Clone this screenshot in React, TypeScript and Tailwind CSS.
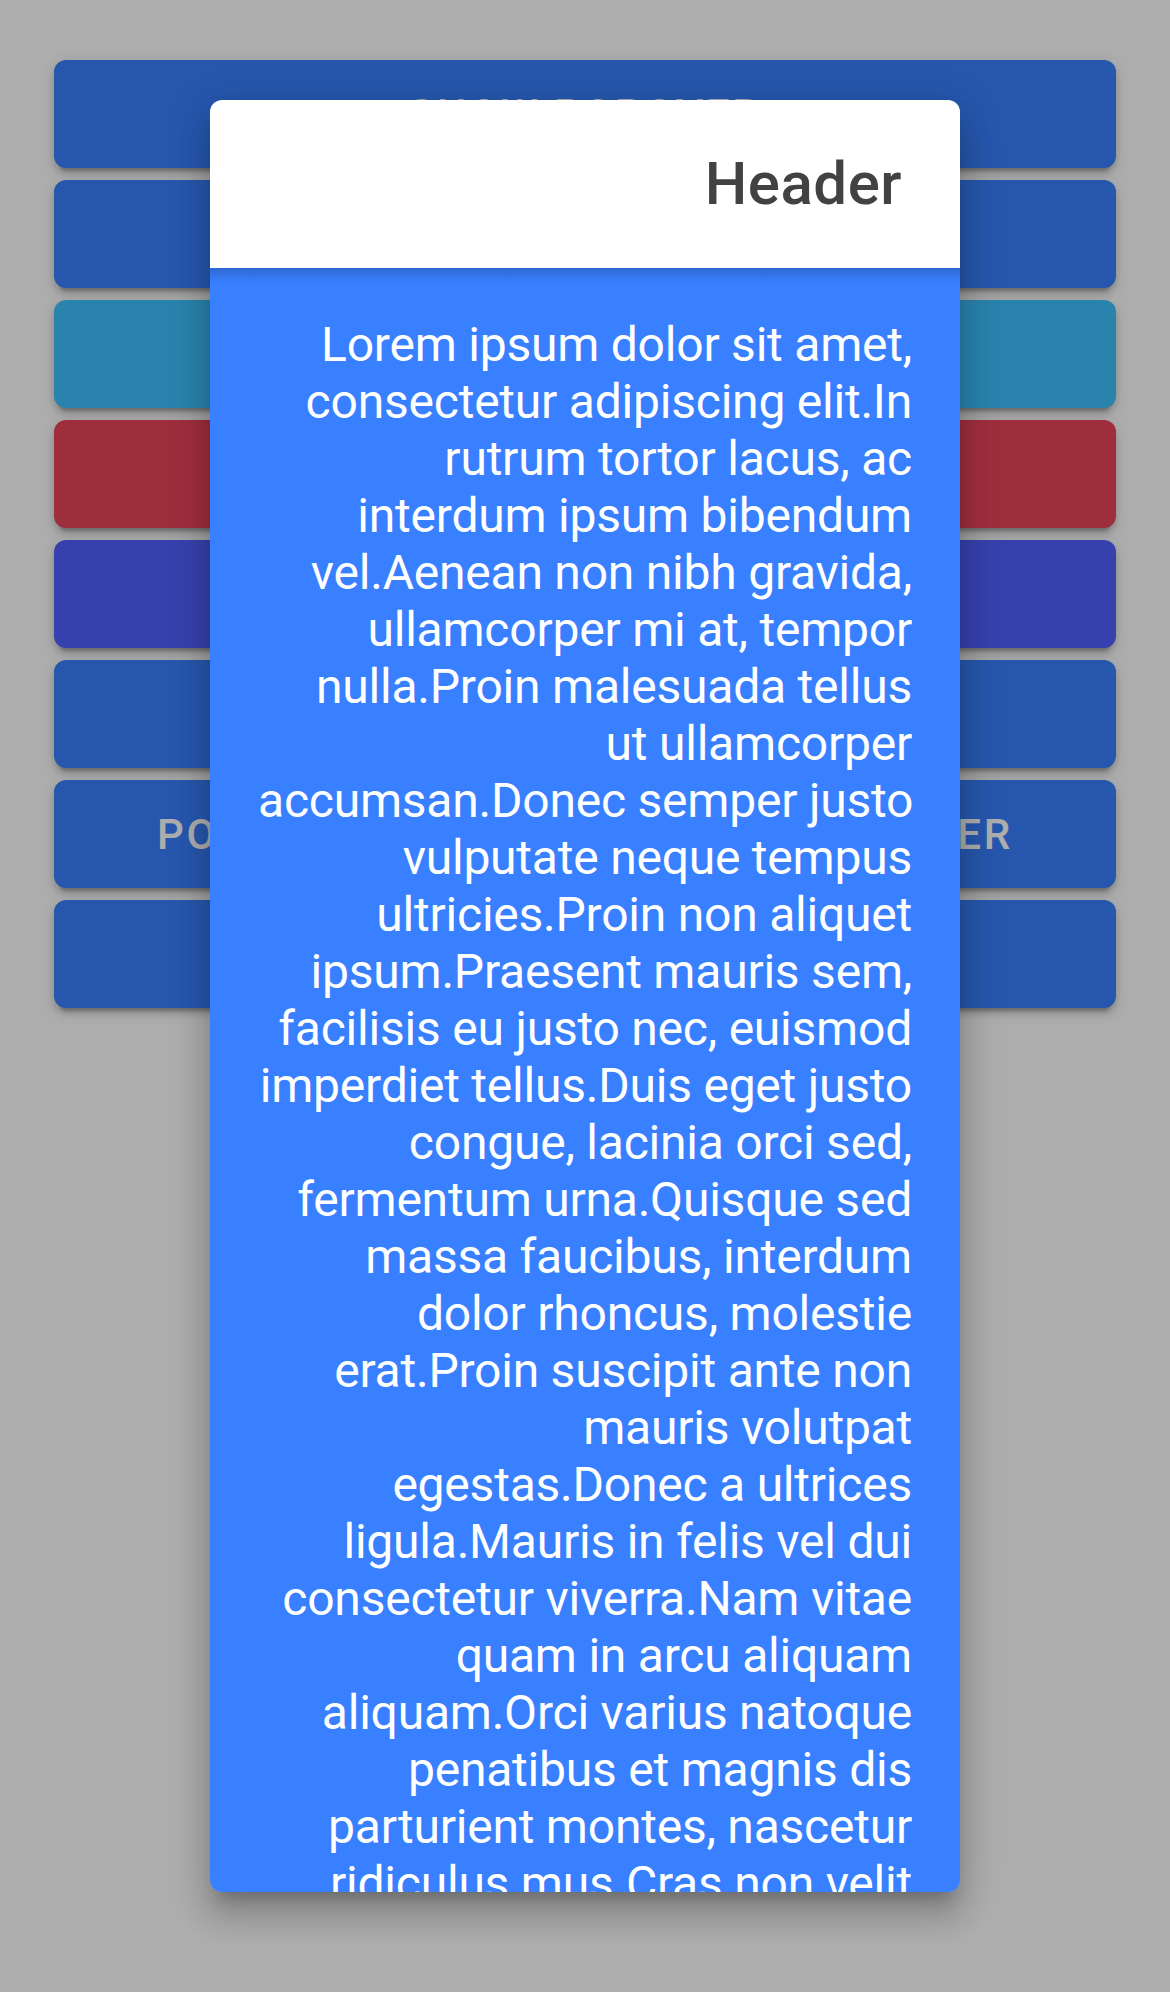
import React from 'react';

const buttons = [
  { label: 'Show Popover', color: 'bg-[#3880ff]' },
  { label: 'Show Long List Popover', color: 'bg-[#3880ff]' },
  { label: 'No Event Popover', color: 'bg-[#3dc2ff]' },
  { label: 'Custom Class Popover', color: 'bg-[#eb445a]' },
  { label: 'Translucent Popover', color: 'bg-[#5260ff]' },
  { label: 'No Backdrop Popover', color: 'bg-[#3880ff]' },
  { label: 'Popover with translucent header', color: 'bg-[#3880ff]' },
  { label: 'Popover Events', color: 'bg-[#3880ff]' },
];

// lines as they wrap in the popover
const loremLines = [
  'Lorem ipsum dolor sit amet,',
  'consectetur adipiscing elit.In',
  'rutrum tortor lacus, ac',
  'interdum ipsum bibendum',
  'vel.Aenean non nibh gravida,',
  'ullamcorper mi at, tempor',
  'nulla.Proin malesuada tellus',
  'ut ullamcorper',
  'accumsan.Donec semper justo',
  'vulputate neque tempus',
  'ultricies.Proin non aliquet',
  'ipsum.Praesent mauris sem,',
  'facilisis eu justo nec, euismod',
  'imperdiet tellus.Duis eget justo',
  'congue, lacinia orci sed,',
  'fermentum urna.Quisque sed',
  'massa faucibus, interdum',
  'dolor rhoncus, molestie',
  'erat.Proin suscipit ante non',
  'mauris volutpat',
  'egestas.Donec a ultrices',
  'ligula.Mauris in felis vel dui',
  'consectetur viverra.Nam vitae',
  'quam in arcu aliquam',
  'aliquam.Orci varius natoque',
  'penatibus et magnis dis',
  'parturient montes, nascetur',
  'ridiculus mus.Cras non velit',
  'dolor.Vestibulum at turpis ut',
  'lectus hendrerit rhoncus et in',
];

export default function App() {
  return (
    <div className="relative h-[1992px] w-full overflow-hidden bg-white font-['Roboto',sans-serif]">
      {/* Page buttons */}
      <div className="flex flex-col gap-[12px] px-[54px] pt-[60px]">
        {buttons.map((b) => (
          <button
            key={b.label}
            className={`${b.color} flex h-[108px] items-center justify-center rounded-[12px] text-[42px] font-medium uppercase tracking-[2.75px] text-white shadow-[0_9px_3px_-6px_rgba(0,0,0,0.2),0_6px_6px_0_rgba(0,0,0,0.14),0_3px_15px_0_rgba(0,0,0,0.12)]`}
          >
            {b.label}
          </button>
        ))}
      </div>

      {/* Backdrop */}
      <div className="absolute inset-0 bg-black/[0.32]" />

      {/* Popover */}
      <div className="absolute left-[210px] top-[100px] flex h-[1792px] w-[750px] flex-col overflow-hidden rounded-[12px] shadow-[0_15px_15px_-9px_rgba(0,0,0,0.2),0_24px_30px_3px_rgba(0,0,0,0.14),0_9px_42px_6px_rgba(0,0,0,0.12)]">
        <header className="relative z-10 flex h-[168px] shrink-0 items-center justify-end bg-white pr-[58px]">
          <h1 className="text-[60px] font-medium tracking-[0.5px] text-[#424242]">Header</h1>
          <div className="absolute left-0 right-0 top-full h-[15px] bg-gradient-to-b from-black/[0.18] to-transparent" />
        </header>
        <div className="flex-1 overflow-hidden bg-[#3880ff] px-[48px] pt-[48px] text-right text-[48px] leading-[57px] tracking-[-0.22px] text-white">
          {loremLines.map((line) => (
            <p key={line} className="whitespace-nowrap">
              {line}
            </p>
          ))}
        </div>
      </div>
    </div>
  );
}
